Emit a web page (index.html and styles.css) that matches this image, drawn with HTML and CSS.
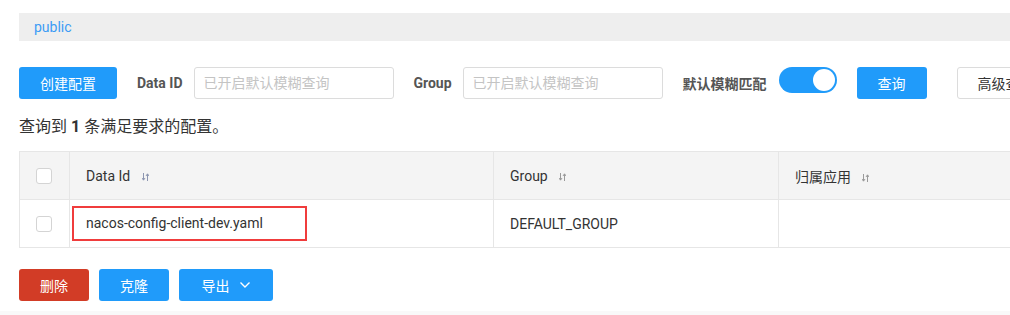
FILE: index.html
```html
<!DOCTYPE html>
<html lang="zh-CN">

<head>
    <meta charset="UTF-8" />
    <title>配置管理</title>
    <link rel="stylesheet" href="styles.css">
</head>

<body>
    <div class="page">
        <div class="ns-bar"><span class="ns-name">public</span></div>

        <div class="toolbar">
            <button class="btn btn-primary btn-create">创建配置</button>
            <label class="field-label">Data ID</label>
            <input class="field-input" type="text" placeholder="已开启默认模糊查询" />
            <label class="field-label">Group</label>
            <input class="field-input" type="text" placeholder="已开启默认模糊查询" />
            <span class="field-label field-cn">默认模糊匹配</span>
            <span class="switch"><span class="switch-knob"></span></span>
            <button class="btn btn-primary btn-query">查询</button>
            <button class="btn btn-normal btn-advanced">高级查询</button>
        </div>

        <p class="result">查询到 <b>1</b> 条满足要求的配置。</p>

        <table class="grid">
            <thead>
                <tr>
                    <th class="col-check"><span class="checkbox"></span></th>
                    <th class="col-id">Data Id <svg class="sort" width="7" height="10" viewBox="0 0 7 10"><path d="M1.5 1v7M0 6l1.5 2.2L3 6M5.5 9V2M4 4l1.5-2.2L7 4" fill="none" stroke="#8d96b0" stroke-width="1"/></svg></th>
                    <th class="col-group">Group <svg class="sort" width="7" height="10" viewBox="0 0 7 10"><path d="M1.5 1v7M0 6l1.5 2.2L3 6M5.5 9V2M4 4l1.5-2.2L7 4" fill="none" stroke="#9a9a9a" stroke-width="1"/></svg></th>
                    <th class="col-app">归属应用 <svg class="sort" width="7" height="10" viewBox="0 0 7 10"><path d="M1.5 1v7M0 6l1.5 2.2L3 6M5.5 9V2M4 4l1.5-2.2L7 4" fill="none" stroke="#9a9a9a" stroke-width="1"/></svg></th>
                </tr>
            </thead>
            <tbody>
                <tr>
                    <td class="col-check"><span class="checkbox"></span></td>
                    <td class="col-id"><span class="highlight">nacos-config-client-dev.yaml</span></td>
                    <td class="col-group">DEFAULT_GROUP</td>
                    <td class="col-app"></td>
                </tr>
            </tbody>
        </table>

        <div class="actions">
            <button class="btn btn-danger btn-small">删除</button>
            <button class="btn btn-primary btn-small">克隆</button>
            <button class="btn btn-primary btn-export">导出 <svg class="chev" width="12" height="8" viewBox="0 0 12 8"><path d="M1.5 1.5L6 6l4.5-4.5" fill="none" stroke="#fff" stroke-width="1.4"/></svg></button>
        </div>
    </div>
    <div class="footer-strip"></div>
</body>

</html>
```

FILE: styles.css
```css
body,
html {
    margin: 0;
    padding: 0;
    background-color: #fff;
    font-family: Roboto, "Noto Sans CJK SC", sans-serif;
    color: #333;
    overflow: hidden;
}

.page {
    width: 1120px;
    padding: 13px 0 0 19px;
    box-sizing: border-box;
    height: 311px;
}

.ns-bar {
    height: 28px;
    background-color: #eeeeee;
    display: flex;
    align-items: center;
    padding-left: 15px;
}

.ns-name {
    color: #3c9cf5;
    font-size: 14px;
}

.toolbar {
    display: flex;
    align-items: center;
    height: 32px;
    margin-top: 26px;
}

.btn {
    height: 32px;
    border: none;
    border-radius: 3px;
    font-size: 14px;
    font-family: Roboto, "Noto Sans CJK SC", sans-serif;
    color: #fff;
    padding: 0;
    cursor: pointer;
    box-sizing: border-box;
    flex-shrink: 0;
}

.btn-primary {
    background-color: #209bfa;
}

.btn-danger {
    background-color: #d23c26;
}

.btn-normal {
    background-color: #fff;
    border: 1px solid #dcdcdc;
    color: #333;
    text-align: left;
    padding-left: 20px;
}

.btn-create {
    width: 98px;
    margin-right: 20px;
}

.field-label {
    font-size: 14px;
    font-weight: bold;
    color: #555;
    margin-right: 11px;
    flex-shrink: 0;
}

.field-input {
    width: 200px;
    height: 32px;
    border: 1px solid #dcdcdc;
    border-radius: 3px;
    box-sizing: border-box;
    padding: 0 9px;
    font-size: 14px;
    font-family: Roboto, "Noto Sans CJK SC", sans-serif;
    margin-right: 20px;
    flex-shrink: 0;
}

.field-input::placeholder {
    color: #c4c4c4;
}

.field-cn {
    margin-right: 12px;
}

.switch {
    position: relative;
    display: inline-block;
    width: 58px;
    height: 26px;
    border-radius: 13px;
    background-color: #209bfa;
    align-self: flex-start;
    margin-right: 20px;
    flex-shrink: 0;
}

.switch-knob {
    position: absolute;
    right: 2px;
    top: 2px;
    width: 22px;
    height: 22px;
    border-radius: 50%;
    background-color: #fff;
}

.btn-query {
    width: 70px;
    margin-right: 30px;
}

.btn-advanced {
    width: 100px;
}

.result {
    margin: 18px 0 0;
    font-size: 16px;
    line-height: 20px;
    color: #333;
}

.grid {
    margin-top: 14px;
    border-collapse: collapse;
    width: 1100px;
    font-size: 14px;
}

.grid th,
.grid td {
    height: 47px;
    border: 1px solid #e6e6e6;
    text-align: left;
    padding: 0 0 0 16px;
    font-weight: normal;
    color: #333;
}

.grid th {
    background-color: #f4f4f4;
}

.grid .col-check {
    width: 33px;
    padding-left: 16px;
}

.col-id {
    width: 407px;
}

.col-group {
    width: 268px;
}

.sort {
    margin-left: 8px;
    vertical-align: -1px;
}

.checkbox {
    display: block;
    width: 14px;
    height: 14px;
    border: 1px solid #d4d4d4;
    border-radius: 3px;
    background-color: #fff;
}

.highlight {
    display: inline-block;
    margin-left: -14px;
    padding: 7px 0 8px 12px;
    width: 219px;
    border: 2px solid #f03c3c;
}

.actions {
    display: flex;
    gap: 10px;
    margin-top: 21px;
}

.btn-small {
    width: 70px;
}

.btn-export {
    width: 94px;
    display: flex;
    align-items: center;
    justify-content: center;
    gap: 9px;
}

.footer-strip {
    height: 4px;
    background-color: #f9f9f9;
}
```
